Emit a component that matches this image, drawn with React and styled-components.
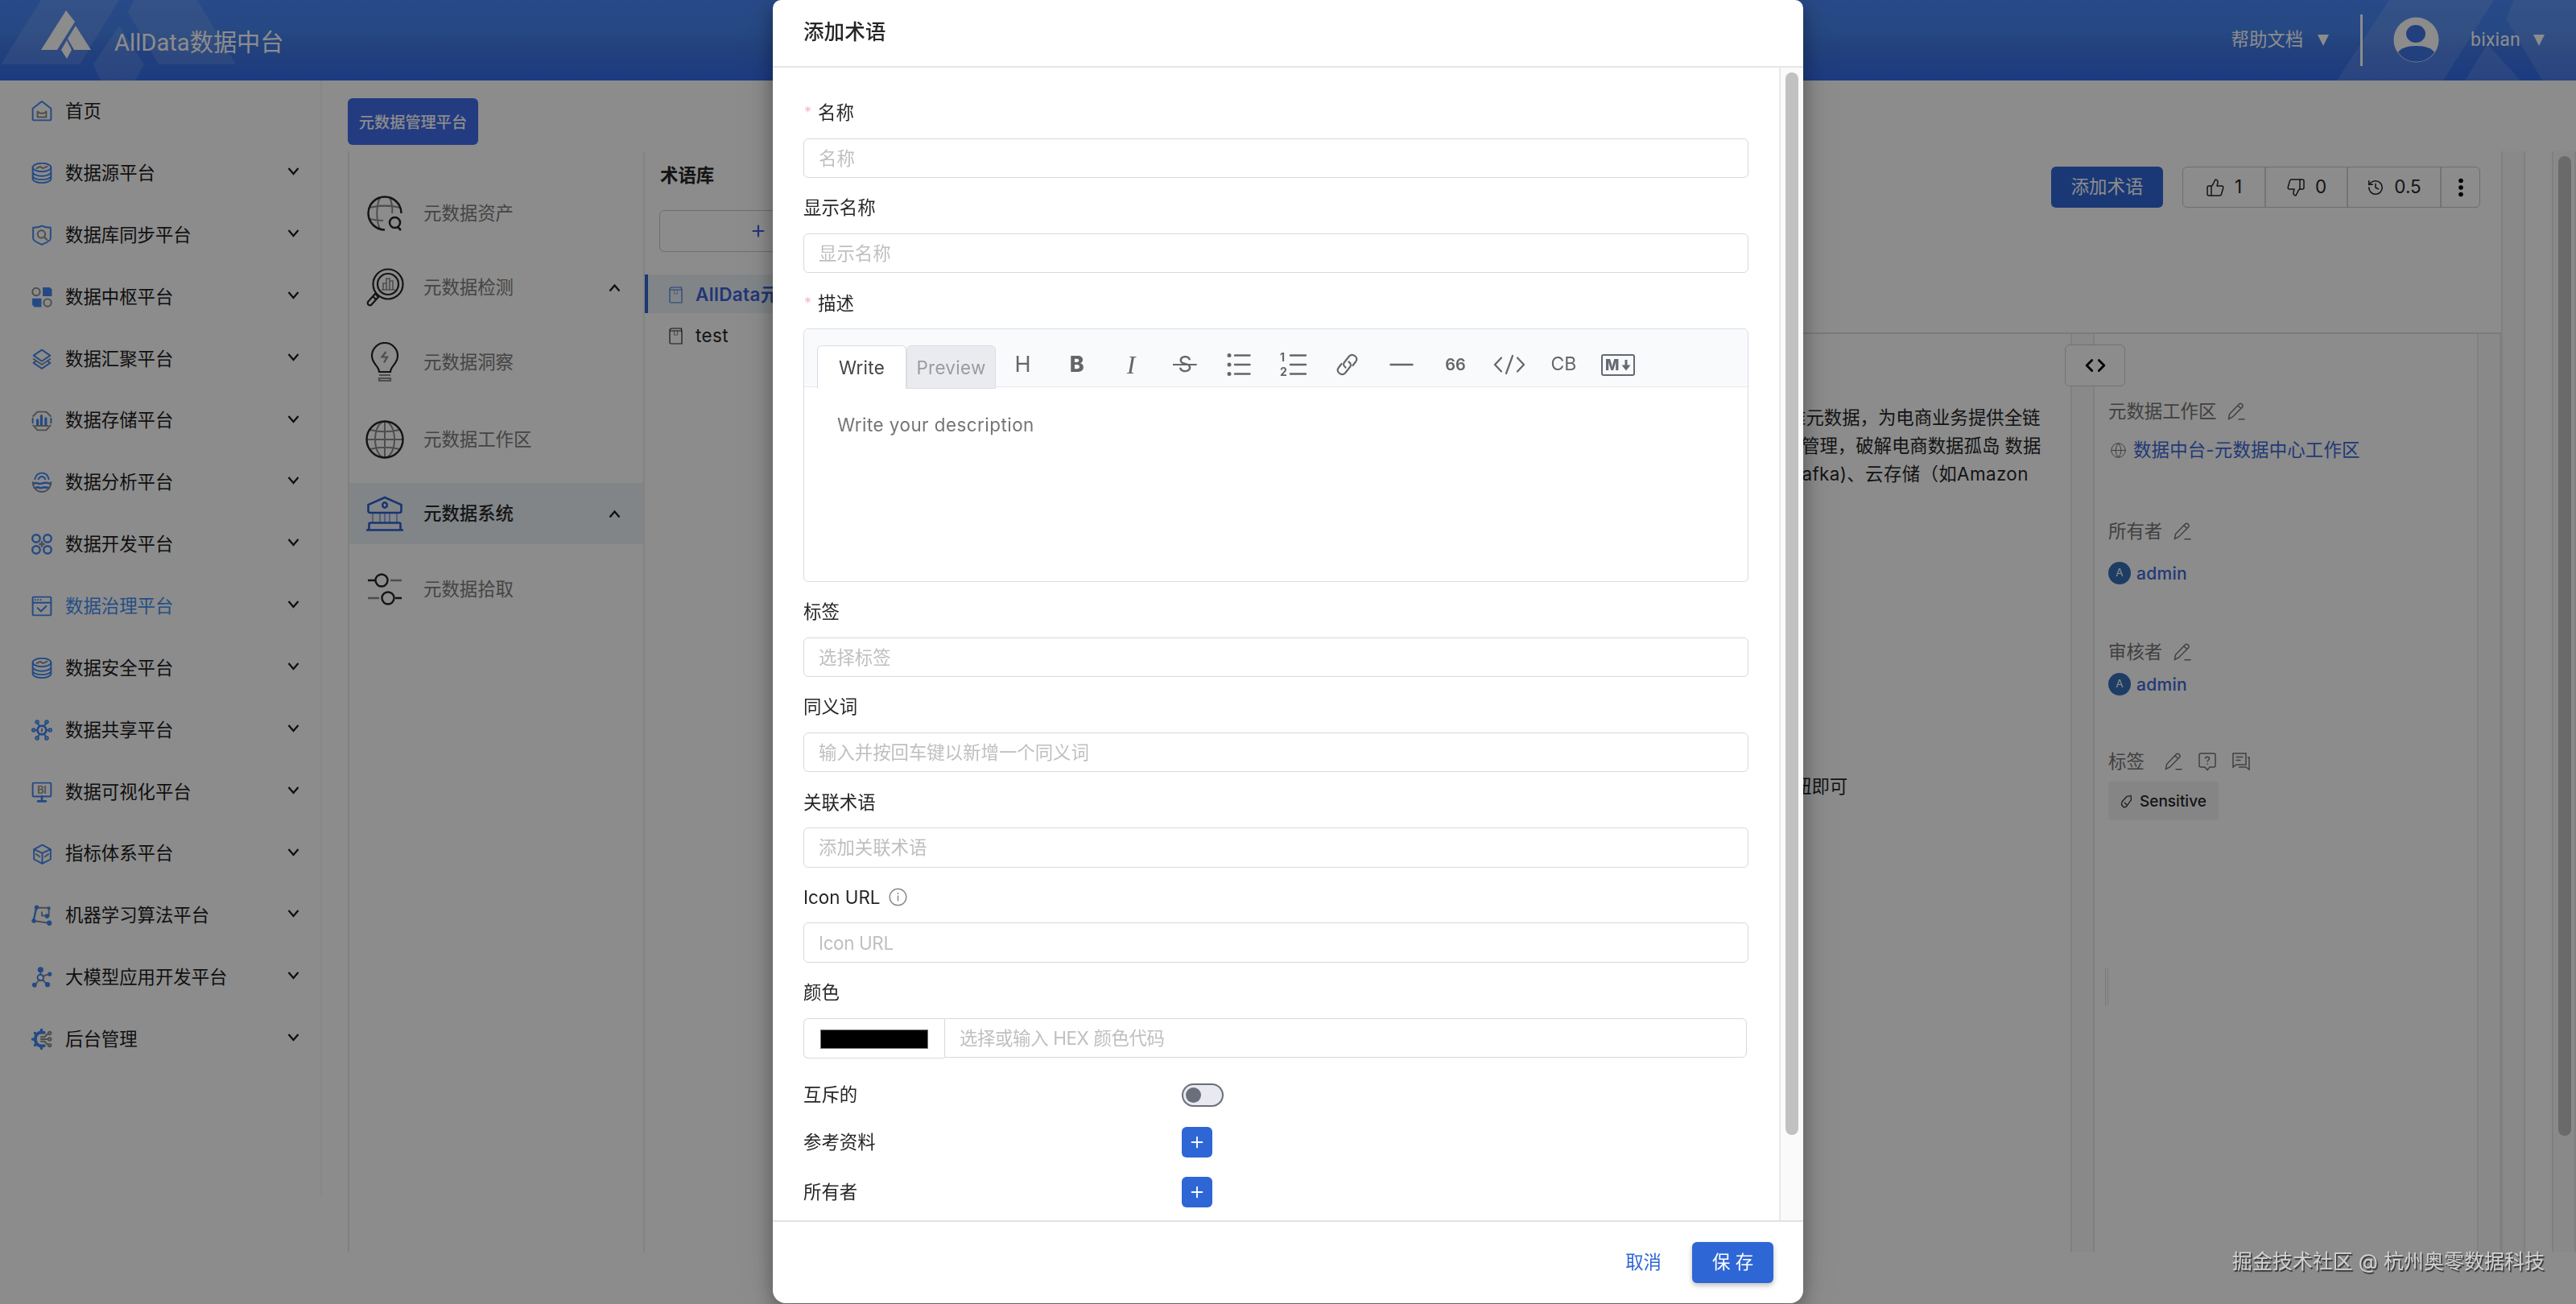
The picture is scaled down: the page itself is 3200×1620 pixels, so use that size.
import React from 'react';
import styled, { createGlobalStyle, css } from 'styled-components';
import { Code, Globe, History, List, Plus, ThumbsDown, ThumbsUp } from 'lucide-react';

const GlobalStyle = createGlobalStyle`
  * {
    box-sizing: border-box;
  }
  body {
    margin: 0;
    overflow: hidden;
    background: #fff;
    color: #262626;
    font-family: Inter, 'Noto Sans CJK SC', sans-serif;
    font-size: 22.4px;
    line-height: 1;
  }
  button, input, textarea {
    font: inherit;
  }
`;

const Page = styled.div`
  display: flex;
  flex-direction: column;
  width: 3200px;
  height: 1620px;
  overflow: hidden;
`;

/* ---------- header ---------- */
const Header = styled.header`
  position: relative;
  display: flex;
  align-items: center;
  flex: none;
  height: 100px;
  padding: 0 39px 0 51px;
  background: linear-gradient(180deg, #4a87f8 0%, #4583ee 40%, #3f77e4 60%, #346bea 100%);
  color: #fff;
`;
const HeaderArt = styled.svg`
  position: absolute;
  top: 0;
  left: 0;
`;
const HeaderPart = styled.div`
  position: relative;
  display: flex;
  align-items: center;
  height: 100px;
  padding-bottom: ${(props) => props.$bottom || 3}px;
`;
const Brand = styled.h1`
  margin: 8px auto 0 28px;
  position: relative;
  font-family: Roboto, 'Noto Sans CJK SC', sans-serif;
  font-weight: 400;
  font-size: 29.2px;
`;
const Caret = styled.i`
  margin-left: ${(props) => props.$gap}px;
  border: 7.5px solid transparent;
  border-top: 14px solid #fff;
  border-bottom: 0;
`;
const HeaderLine = styled.div`
  width: 3px;
  height: 64px;
  margin: 0 38px 0 39px;
  background: #fff;
`;
const UserName = styled.span`
  margin-left: 39px;
  font-family: Roboto, sans-serif;
  font-size: 23px;
  letter-spacing: 0.2px;
`;

/* ---------- left menu ---------- */
const Body = styled.div`
  display: flex;
  flex: 1;
  min-height: 0;
`;
const Sidebar = styled.aside`
  flex: none;
  width: 400px;
  height: 1388px;
  border-right: 2px solid #f6f6f6;
`;
const MenuItem = styled.div`
  display: flex;
  align-items: center;
  height: 76.85px;
  padding: 0 26px 0 39px;
  color: ${(props) => (props.$active ? '#4390f5' : '#1c1c1c')};
  & > svg {
    flex: none;
  }
  & > svg:last-child {
    margin-bottom: 3px;
  }
  & > span {
    flex: 1;
    margin-left: 16px;
  }
`;

/* ---------- second level ---------- */
const Main = styled.main`
  display: flex;
  flex-direction: column;
  flex: 1;
  min-width: 0;
`;
const TabBar = styled.div`
  display: flex;
  align-items: flex-end;
  flex: none;
  height: 88px;
  padding: 0 0 8px 32px;
`;
const PlatformTab = styled.div`
  display: flex;
  align-items: center;
  justify-content: center;
  width: 162px;
  height: 58px;
  padding-top: 4px;
  border-radius: 6px;
  background: #416ceb;
  color: #fff;
  font-size: 19.2px;
  font-weight: 500;
`;
const Content = styled.div`
  display: flex;
  height: 1368px;
  margin-left: 32px;
  border-left: 2px solid #e9e9e9;
`;
const Nav = styled.nav`
  flex: none;
  width: 367px;
  padding-top: 39px;
  border-right: 2px solid #ededed;
`;
const NavItem = styled.div`
  display: flex;
  align-items: center;
  height: 76px;
  margin-top: ${(props) => props.$gap || 0}px;
  padding: 0 28px 0 20px;
  color: ${(props) => (props.$active ? '#292929' : '#7d7d7d')};
  background: ${(props) => (props.$active ? '#ebf3f7' : 'transparent')};
  font-weight: ${(props) => (props.$active ? 500 : 400)};
  & > span {
    flex: 1;
    margin-left: 24px;
  }
`;
const Tree = styled.section`
  flex: none;
  width: 400px;
`;
const TreeTitle = styled.h2`
  margin: 19px 0 32px 19px;
  font-size: 22.4px;
  line-height: 22px;
  font-weight: 600;
`;
const AddGlossary = styled.div`
  display: flex;
  align-items: center;
  height: 52px;
  margin: 0 0 28px 18px;
  padding-left: 111px;
  border: 1px solid #c9c9c9;
  border-radius: 6px;
  color: #3c62d8;
`;
const TreeRow = styled.div`
  display: flex;
  align-items: center;
  height: 48px;
  margin-bottom: 3px;
  padding: 2px 0 0 26px;
  border-left: 4px solid transparent;
  gap: 16px;
  letter-spacing: 0.4px;
  ${(props) =>
    props.$active &&
    css`
      border-color: #2e66d6;
      background: #ebf3f7;
      color: #3c62d8;
      font-weight: 600;
    `}
`;

/* ---------- detail ---------- */
const Detail = styled.section`
  display: flex;
  flex-direction: column;
  flex: 1;
`;
const DetailHead = styled.div`
  display: flex;
  justify-content: flex-end;
  height: 227px;
  padding: 19px 26px 0 0;
  border-bottom: 2px solid #e0e0e0;
`;
const AddTerm = styled.div`
  display: flex;
  align-items: center;
  justify-content: center;
  width: 139px;
  height: 51px;
  margin-right: 24px;
  border-radius: 6px;
  background: #2e66d6;
  color: #fff;
`;
const Votes = styled.div`
  display: flex;
  height: 51px;
  border: 1px solid #c8c8c8;
  border-radius: 6px;
`;
const Vote = styled.div`
  display: flex;
  align-items: center;
  justify-content: center;
  gap: 12px;
  width: ${(props) => props.$width}px;
  & + & {
    border-left: 2px solid #d4d4d4;
  }
`;
const DetailBody = styled.div`
  display: flex;
  flex: 1;
`;
const Article = styled.div`
  flex: 1;
  padding-top: 86px;
  position: relative;
`;
const ArticleLine = styled.p`
  margin: 0;
  padding-left: ${(props) => props.$indent}px;
  line-height: 35px;
  letter-spacing: ${(props) => props.$spacing || 0}px;
  white-space: nowrap;
`;
const ArticleNote = styled(ArticleLine)`
  margin-top: 353px;
`;
const Track = styled.div`
  position: relative;
  flex: none;
  width: 30px;
  border: solid #eaeaea;
  border-width: 0 2px;
  background: #fafafa;
`;
const TrackThumb = styled.div`
  width: 16px;
  height: ${(props) => props.$height}px;
  margin: 6px 0 0 6px;
  border-radius: 8px;
  background: #c1c1c1;
`;
const Collapse = styled.div`
  position: absolute;
  top: 13px;
  left: -9px;
  display: flex;
  align-items: center;
  justify-content: center;
  width: 75px;
  height: 52px;
  border: 1px solid #d0d0d0;
  border-radius: 6px;
  background: #fff;
  color: #000;
`;
const Side = styled.aside`
  flex: none;
  width: 475px;
  padding: 84px 0 0 17px;
`;
const SideTitle = styled.div`
  display: flex;
  align-items: center;
  gap: ${(props) => props.$gap || 14}px;
  height: 24px;
  margin-top: ${(props) => props.$top || 0}px;
  color: #767676;
`;
const TagIcons = styled.div`
  display: flex;
  gap: 20px;
  margin-left: 5px;
`;
const SideLink = styled.div`
  display: flex;
  align-items: center;
  height: 28px;
  margin-top: ${(props) => props.$top}px;
  gap: ${(props) => props.$gap}px;
  padding-left: ${(props) => props.$left || 0}px;
  color: #3c68d8;
  letter-spacing: 0.2px;
  white-space: nowrap;
`;
const AdminName = styled.span`
  font-size: 21px;
  font-weight: 500;
  letter-spacing: 0.3px;
`;
const UserBadge = styled.span`
  display: flex;
  align-items: center;
  justify-content: center;
  width: 28px;
  height: 28px;
  border-radius: 50%;
  background: #3670b8;
  color: #fff;
  font-size: 13.5px;
`;
const Tag = styled.div`
  display: flex;
  align-items: center;
  gap: 9px;
  width: 137px;
  height: 48px;
  margin-top: 13px;
  padding-left: 15px;
  border-radius: 4px;
  background: #f3f3f3;
  font-size: 19px;
  font-weight: 500;
`;
const Resizer = styled.div`
  width: 4px;
  height: 46px;
  margin: 184px 0 0 -4px;
  border: solid #dcdcdc;
  border-width: 0 1px;
`;
const Spacer = styled.div`
  width: 33px;
`;

/* ---------- modal ---------- */
const Mask = styled.div`
  position: fixed;
  inset: 0;
  display: flex;
  justify-content: center;
  background: rgba(0, 0, 0, 0.45);
`;
const Modal = styled.div`
  display: flex;
  flex-direction: column;
  width: 1280px;
  height: 1619px;
  overflow: hidden;
  border-radius: 10px 10px 16px 16px;
  background: #fff;
  box-shadow: 0 8px 24px rgba(0, 0, 0, 0.35), 0 0 60px rgba(0, 0, 0, 0.12);
`;
const ModalTitle = styled.div`
  flex: none;
  height: 84px;
  padding: 27px 0 0 38px;
  border-bottom: 2px solid #e6e6e6;
  font-size: 25.6px;
  font-weight: 500;
`;
const ModalBody = styled.div`
  display: flex;
  flex: none;
  height: 1432px;
  overflow: hidden;
`;
const Form = styled.div`
  flex: 1;
  padding: 24px 38px 0 38px;
`;
const FormScroll = styled.div`
  flex: none;
  width: 30px;
  border-left: 2px solid #e8e8e8;
  background: #fafafa;
`;
const Field = styled.div`
  margin-bottom: 5px;
`;
const Label = styled.label`
  display: flex;
  align-items: center;
  height: 63.7px;
  padding-top: 1px;
`;
const Required = styled.span`
  width: 18px;
  padding-left: 1px;
  color: #f7b9c0;
  font-size: 18px;
`;
const Input = styled.input`
  display: block;
  width: ${(props) => (props.$width ? `${props.$width}px` : '100%')};
  height: 49.5px;
  padding: 0 18px;
  border: 1.5px solid #d9d9d9;
  border-radius: ${(props) => props.$radius || '6px'};
  outline: 0;
  &::placeholder {
    color: #bfbfbf;
    opacity: 1;
    letter-spacing: ${(props) => (props.$tight ? '-0.35px' : 'normal')};
  }
`;
const Editor = styled.div`
  height: 315px;
  border: 1.5px solid #dadde6;
  border-radius: 6px;
`;
const Toolbar = styled.div`
  display: flex;
  height: 72px;
  padding: 20px 0 0 16px;
  border-bottom: 1px solid #e6e8ee;
  border-radius: 6px 6px 0 0;
  background: #f8fafc;
`;
const EditorTab = styled.div`
  display: flex;
  align-items: center;
  justify-content: center;
  flex: none;
  width: 111px;
  height: 54px;
  padding-top: 2px;
  border: 1px solid #dadde6;
  border-bottom-color: ${(props) => (props.$active ? '#fff' : '#dadde6')};
  border-radius: 6px 6px 0 0;
  background: ${(props) => (props.$active ? '#fff' : '#eaebef')};
  color: ${(props) => (props.$active ? '#444' : '#999ba3')};
  letter-spacing: 0.3px;
`;
const Tool = styled.div`
  display: flex;
  align-items: center;
  justify-content: center;
  width: 67.2px;
  height: 47px;
  color: #666;
  font-size: ${(props) => props.$size || 27}px;
  font-weight: ${(props) => props.$weight || 400};
`;
const ItalicTool = styled(Tool)`
  font-family: 'Liberation Serif', serif;
  font-style: italic;
  font-size: 32px;
`;
const StrikeTool = styled(Tool)`
  & > span {
    padding: 0 6px;
    background: linear-gradient(#666, #666) center 52% / 100% 2px no-repeat;
  }
`;
const Textarea = styled.div`
  padding: 36px 0 0 41px;
  color: #757575;
  letter-spacing: 0.48px;
`;
const ColorRow = styled.div`
  display: flex;
`;
const ColorBox = styled.div`
  width: 175px;
  height: 50.5px;
  padding: 13px 20px;
  border: 1.5px solid #d9d9d9;
  border-right: 0;
  border-radius: 6px 0 0 6px;
`;
const Swatch = styled.div`
  height: 24px;
  border: 1px solid #767676;
  background: #000;
`;
const SplitRow = styled.div`
  display: grid;
  grid-template-columns: 470px 1fr;
  align-items: center;
  height: ${(props) => props.$height}px;
`;
const Switch = styled.div`
  width: 52px;
  height: 29px;
  padding: 3px;
  border: 2px solid #6b6e7b;
  border-radius: 15px;
  background: #e8eaef;
  &::before {
    content: '';
    display: block;
    width: 19px;
    height: 19px;
    border-radius: 50%;
    background: #6b6e7b;
  }
`;
const PlusButton = styled.div`
  display: flex;
  align-items: center;
  justify-content: center;
  width: 38px;
  height: 38px;
  border-radius: 6px;
  background: #2e66d6;
  color: #fff;
`;
const ModalFooter = styled.div`
  display: flex;
  align-items: flex-start;
  justify-content: flex-end;
  flex: 1;
  padding: 25px 37px 0 0;
  border-top: 2px solid #e2e2e2;
`;
const Cancel = styled.div`
  margin-right: 38px;
  line-height: 50px;
  color: #2e66d6;
`;
const Save = styled.div`
  width: 101px;
  height: 51px;
  border-radius: 6px;
  background: #2e66d6;
  box-shadow: 0 3px 6px rgba(0, 0, 0, 0.25);
  color: #fff;
  line-height: 50px;
  text-align: center;
`;
const Watermark = styled.div`
  position: fixed;
  right: 39px;
  bottom: 38px;
  color: #d2d2d2;
  font-size: 25px;
  line-height: 30px;
  text-shadow: 1.5px 1.5px 1px #333;
`;

/* ---------- icons ---------- */
const BLUE = '#4388f0';
const GREY = '#8d8d8d';

const Icon = ({ size = 26, color = BLUE, width = 1.8, children }) => (
  <svg
    width={size}
    height={size}
    viewBox="0 0 24 24"
    fill="none"
    stroke={color}
    strokeWidth={width}
    strokeLinecap="round"
    strokeLinejoin="round"
  >
    {children}
  </svg>
);

const Chevron = ({ up }) => (
  <svg width="15" height="11" viewBox="0 0 15 11" fill="none" stroke="#1c1c1c" strokeWidth="2.3">
    <path d={up ? 'M1.5 9.5l6-7 6 7' : 'M1.5 1l6 7 6-7'} />
  </svg>
);

const menuIcons = {
  home: (
    <Icon>
      <path d="M12 1l10.5 8v12c0 1-.5 1.500-1.500 1.500H3c-1 0-1.500-.5-1.500-1.500V9z" />
      <path d="M7 12.500V19h10v-6.500l-3 2h-4z" stroke={GREY} />
    </Icon>
  ),
  database: (
    <Icon>
      <ellipse cx="12" cy="5.500" rx="10.500" ry="4.800" />
      <path d="M1.500 6v4.500c0 2.700 4.700 5 10.500 5s10.500-2.300 10.500-5V6M1.500 10.500V15c0 2.700 4.700 4.500 10.500 4.500s10.500-1.800 10.500-4.500v-4.500M1.500 15v3.500c0 2.500 4.700 4.700 10.500 4.700s10.500-2.200 10.500-4.700V15" />
      <path d="M6 6.500l4-2 3 2 5-2" stroke={GREY} />
    </Icon>
  ),
  shield: (
    <Icon>
      <path d="M12 1.500c3 1.500 6 2 10 2V16c0 2-5 5-10 7-5-2-10-5-10-7V3.500c4 0 7-.5 10-2z" />
      <circle cx="11.500" cy="11" r="4.300" stroke={GREY} />
      <path d="M15 14.500l3 3" stroke={GREY} />
    </Icon>
  ),
  blocks: (
    <Icon>
      <circle cx="5.500" cy="6" r="4.300" stroke={GREY} />
      <circle cx="18.500" cy="18.500" r="4.300" stroke={GREY} />
      <path d="M13 1h8l2.500 2v8H13zM1 13.500h10.500v10H3.500L1 21z" fill={BLUE} stroke="none" />
    </Icon>
  ),
  layers: (
    <Icon>
      <path d="M12 1.500l9.500 6.500-9.500 6.500L2.500 8z" />
      <path d="M2.500 12l9.500 6.500 9.500-6.500" stroke={GREY} />
      <path d="M5 14.500l-2.500 2L12 23l9.500-6.500-2.500-2" />
    </Icon>
  ),
  storage: (
    <Icon>
      <path d="M7 1.500h10l5 5M22 17l-5 5.500H7L2 17M2 6.500l5-5" stroke={GREY} />
      <path d="M1.500 9v5M22.500 9v5" />
      <path d="M7 16v-5M11.500 16V6M16.500 16V9" strokeWidth="3" />
      <path d="M5 17.500h14" stroke={GREY} />
    </Icon>
  ),
  analysis: (
    <Icon>
      <path d="M4 8.500C5 4 8 1.500 12 1.500s7 2.500 8 7M8 8.500c1-2 2.300-3 4-3s3 1 4 3" />
      <path d="M1.500 12c.3 6.500 4.500 11 10.500 11s10.200-4.500 10.500-11" stroke={GREY} />
      <path d="M3 13.500c3-2 5 1.500 9 0s6-1 9 0M5 18.500c3-2 4 1 7 0s4-1 7 0" strokeWidth="2.400" />
    </Icon>
  ),
  dev: (
    <Icon width={2.2}>
      <circle cx="5.500" cy="5.500" r="4.400" />
      <circle cx="18.500" cy="5.500" r="4.400" />
      <circle cx="5.500" cy="18.500" r="4.400" />
      <circle cx="18.500" cy="18.500" r="4.400" />
      <path d="M12 9.500v5M9.500 12h5" stroke={GREY} />
    </Icon>
  ),
  govern: (
    <Icon>
      <rect x="1.500" y="1.500" width="21" height="21" rx="1" />
      <path d="M1.500 8h21M4.500 4.800h.2M7.500 4.800h.2M10.500 4.800h.2M7 14l4 4 6-6" />
    </Icon>
  ),
  share: (
    <Icon>
      <circle cx="12" cy="12" r="5" strokeWidth="2.600" />
      <path d="M9.500 7.500L7 4M14.500 7.500L17 4M9.500 16.500L7 20M14.500 16.500L17 20M4 12h3M17 12h3" />
      <circle cx="6.500" cy="2.800" r="1.700" />
      <circle cx="17.500" cy="2.800" r="1.700" />
      <circle cx="6.500" cy="21.200" r="1.700" />
      <circle cx="17.500" cy="21.200" r="1.700" />
      <circle cx="2.500" cy="12" r="1.700" />
      <circle cx="21.500" cy="12" r="1.700" />
      <path d="M12 10.500v3" stroke={GREY} />
    </Icon>
  ),
  bi: (
    <Icon>
      <rect x="1.500" y="1.500" width="21" height="15.500" rx="1" />
      <path d="M12 17v5M7.500 22.500h9" strokeWidth="2.500" />
      <text x="12" y="13.500" textAnchor="middle" fontSize="11.500" fontWeight="600" fill={GREY} stroke="none">
        BI
      </text>
    </Icon>
  ),
  cube: (
    <Icon>
      <path d="M12.500 1.500l9.500 5v11.500l-9.500 5-9.500-5V6.500zM3 6.500l9.500 4.500L22 6.500M12.500 11v12" />
      <path d="M5.500 12l4 3M19.500 12l-4 3" stroke={GREY} />
    </Icon>
  ),
  ml: (
    <Icon>
      <path d="M6 3.500h14v9h-8V8.500M6 3.500L2.500 18.500l18 2.500" stroke={GREY} />
      <path d="M5.500 3.500L2.500 18" />
      <circle cx="6" cy="3" r="1.700" fill={BLUE} />
      <circle cx="20" cy="4" r="1" fill={BLUE} />
      <circle cx="18" cy="13" r="1.700" fill={BLUE} />
      <circle cx="2.800" cy="18.500" r="1.700" fill={BLUE} />
      <circle cx="20.500" cy="21" r="2" fill={BLUE} />
    </Icon>
  ),
  model: (
    <Icon>
      <path d="M10.500 5v4M13 11l7-2.500M9 15l-5 6M13 15l4.500 5" stroke={GREY} />
      <circle cx="10.500" cy="12.500" r="3.500" />
      <circle cx="10.500" cy="3.500" r="2.400" fill={BLUE} />
      <circle cx="21" cy="8.500" r="1.500" fill={BLUE} />
      <circle cx="3.500" cy="21" r="1.800" fill={BLUE} />
      <circle cx="18.500" cy="20.500" r="2" fill={BLUE} />
    </Icon>
  ),
  admin: (
    <Icon>
      <path d="M14.500 4.500C8 3 4.500 7 4.500 12s3.500 9 10 7.500" strokeWidth="3.600" />
      <path d="M11.500 1v3M11.500 20v3M4 5l2 2M4 19l2-2M1 12h3" strokeWidth="3" />
      <path d="M11 9.500h4l4-4M11 12h8M11 14.500h4l4 4" stroke={GREY} />
      <circle cx="21" cy="5" r="1.600" stroke={GREY} />
      <circle cx="21" cy="12" r="1.600" stroke={GREY} />
      <circle cx="21" cy="19" r="1.600" stroke={GREY} />
    </Icon>
  ),
};

const DARK = '#262626';

const navIcons = {
  asset: (
    <svg width="48" height="48" viewBox="0 0 48 48" fill="none" stroke={GREY} strokeWidth="2">
      <path d="M5 17c12-3 26-3 38 0M5 31c6 1.500 10 2 17 2M18 4c-5 12-5 28 0 40M30 4c3 7 4 13 3 20" />
      <path d="M24 44.500A20.500 20.500 0 1 1 44.500 24" stroke={DARK} strokeWidth="2.500" />
      <circle cx="36.500" cy="35.500" r="6.500" stroke={DARK} strokeWidth="2.500" />
      <path d="M40 41l4 4" stroke={DARK} strokeWidth="2.500" />
    </svg>
  ),
  check: (
    <svg width="48" height="48" viewBox="0 0 48 48" fill="none" stroke={DARK} strokeWidth="2.200">
      <circle cx="28" cy="20" r="18.500" />
      <circle cx="28" cy="20" r="13" />
      <path d="M15 34l-3-2-9 10c-1 3 1 5 4 4l9-10-2-2M9 35l4 4" />
      <path d="M20 27h17M22 27v-8h4v8M26 27V13h4v14M30 27V16h4v11" stroke={GREY} strokeWidth="1.600" />
    </svg>
  ),
  insight: (
    <svg width="48" height="50" viewBox="0 0 48 50" fill="none" stroke={DARK} strokeWidth="2.200">
      <path d="M17 37c0-7-9-10-9-20a16 16 0 0 1 32 0c0 10-9 13-9 20z" />
      <path d="M25.500 12l-5 6.500h6.500l-4 7" stroke={GREY} />
      <path d="M17 41h14M17 45h14v3H17z" stroke={GREY} />
    </svg>
  ),
  domain: (
    <svg width="48" height="50" viewBox="0 0 48 50" fill="none" stroke={GREY} strokeWidth="2">
      <path d="M24 2v46M2 25h44M6 13c12 3 24 3 36 0M6 37c12-3 24-3 36 0" />
      <ellipse cx="24" cy="25" rx="12" ry="22.500" />
      <circle cx="24" cy="25" r="22.500" stroke={DARK} strokeWidth="2.400" />
    </svg>
  ),
  system: (
    <svg width="48" height="48" viewBox="0 0 48 48" fill="none" stroke="#2e5fcf" strokeWidth="2.600">
      <path d="M6 23h36c2 0 2.500-1 2.500-2.500V13L24 4 3.500 13v7.500C3.500 22 4 23 6 23zM4.500 44v-7c0-1 .5-1.500 1.500-1.500h36c1 0 1.500.5 1.500 1.500v7M1 44.500h46" />
      <ellipse cx="24" cy="13.500" rx="2.800" ry="3.200" />
      <path d="M9 23v12M18 23v12M24 23v12M30 23v12M39 23v12" strokeWidth="1.300" opacity=".7" />
    </svg>
  ),
  pick: (
    <svg width="48" height="48" viewBox="0 0 48 48" fill="none" stroke={DARK} strokeWidth="2.400">
      <path d="M3 13h9M37 35h8" />
      <path d="M31 13h14M3 35h14" stroke={GREY} />
      <circle cx="20" cy="13" r="7.500" />
      <circle cx="28" cy="35" r="7.500" />
    </svg>
  ),
};

const BookIcon = ({ color }) => (
  <svg width="17" height="21" viewBox="0 0 17 21" fill="none" stroke={color} strokeWidth="1.200">
    <path d="M1 4v14.500c0 1 .5 1.500 1.500 1.500h13.500V4zM1 4c0-2 1-3 2.500-3h12v3" />
    <path d="M6.500 4v5h4V4" opacity=".5" />
  </svg>
);

const PencilIcon = () => (
  <svg width="22" height="22" viewBox="0 0 22 22" fill="none" stroke="#767676" strokeWidth="1.500">
    <path d="M1.500 20.500l1-6L14.500 2c1-1 2-1 3-.3l1 1c.8.8.8 2 0 3L6.500 18zM13 4l4 3.500M13.500 20.800h8" />
  </svg>
);

const toolbarTools = (
  <>
    <Tool>H</Tool>
    <Tool $weight={800}>B</Tool>
    <ItalicTool>I</ItalicTool>
    <StrikeTool>
      <span>S</span>
    </StrikeTool>
    <Tool>
      <svg width="30" height="28" viewBox="0 0 30 28" fill="#666" stroke="#666" strokeWidth="2.400" strokeLinecap="round">
        <path d="M10 2.500h18.500M10 14h18.500M10 25.500h18.500" />
        <circle cx="3" cy="2.500" r="1.300" />
        <circle cx="3" cy="14" r="1.300" />
        <circle cx="3" cy="25.500" r="1.300" />
      </svg>
    </Tool>
    <Tool>
      <svg width="34" height="30" viewBox="0 0 34 30" fill="none" stroke="#666" strokeWidth="2.400">
        <path d="M13 3.500h19M13 15h19M13 26.500h19" strokeLinecap="round" />
        <text x="0" y="11" fontSize="14" fontWeight="700" fill="#666" stroke="none">
          1
        </text>
        <text x="0" y="29" fontSize="14" fontWeight="700" fill="#666" stroke="none">
          2
        </text>
      </svg>
    </Tool>
    <Tool>
      <svg width="30" height="30" viewBox="0 -2 30 30" fill="none" stroke="#666" strokeWidth="2.200" strokeLinecap="round">
        <path d="M12.500 16.500c-3-2-3-5-1-7l5.500-7c2-2 5-2 7.500 0s2.300 5 .5 7l-3.500 4.500" />
        <path d="M16.500 9.500c3 2 3 5 1 7L12 23.500c-2 2-5 2-7.500 0s-2.300-5-.5-7L7.500 12" />
      </svg>
    </Tool>
    <Tool>
      <svg width="30" height="4" viewBox="0 0 30 4" stroke="#666" strokeWidth="2.400" strokeLinecap="round">
        <path d="M1.500 2h27" />
      </svg>
    </Tool>
    <Tool $size={20} $weight={600}>
      66
    </Tool>
    <Tool>
      <svg width="40" height="26" viewBox="0 0 40 26" fill="none" stroke="#666" strokeWidth="2.200" strokeLinecap="round">
        <path d="M10 4.500L2 13l8 8.500M30 4.500l8 8.500-8 8.500M24 2l-8 22" />
      </svg>
    </Tool>
    <Tool $size={23}>CB</Tool>
    <Tool>
      <svg width="42" height="28" viewBox="0 0 42 28" fill="none" stroke="#666872" strokeWidth="2">
        <rect x="1" y="2" width="40" height="25" rx="2" />
        <text x="5" y="21" fontSize="18.500" fontWeight="800" fill="#666872" stroke="none">
          M
        </text>
        <path d="M31 8v8" strokeWidth="3" />
        <path d="M25.500 14.500h11L31 21.500z" fill="#666872" stroke="none" />
      </svg>
    </Tool>
  </>
);

/* ---------- data ---------- */
const menu = [
  { icon: 'home', text: '首页', leaf: true },
  { icon: 'database', text: '数据源平台' },
  { icon: 'shield', text: '数据库同步平台' },
  { icon: 'blocks', text: '数据中枢平台' },
  { icon: 'layers', text: '数据汇聚平台' },
  { icon: 'storage', text: '数据存储平台' },
  { icon: 'analysis', text: '数据分析平台' },
  { icon: 'dev', text: '数据开发平台' },
  { icon: 'govern', text: '数据治理平台', active: true },
  { icon: 'database', text: '数据安全平台' },
  { icon: 'share', text: '数据共享平台' },
  { icon: 'bi', text: '数据可视化平台' },
  { icon: 'cube', text: '指标体系平台' },
  { icon: 'ml', text: '机器学习算法平台' },
  { icon: 'model', text: '大模型应用开发平台' },
  { icon: 'admin', text: '后台管理' },
];

const nav = [
  { icon: 'asset', text: '元数据资产' },
  { icon: 'check', text: '元数据检测', gap: 16, open: true },
  { icon: 'insight', text: '元数据洞察', gap: 17 },
  { icon: 'domain', text: '元数据工作区', gap: 20 },
  { icon: 'system', text: '元数据系统', gap: 16, open: true, active: true },
  { icon: 'pick', text: '元数据拾取', gap: 18 },
];

const TextField = ({ label, placeholder, required, tight, extra }) => (
  <Field>
    <Label>
      {required && <Required>*</Required>}
      {label}
      {extra}
    </Label>
    <Input placeholder={placeholder} $tight={tight} />
  </Field>
);

const InfoIcon = styled.svg`
  margin-left: 10px;
`;

const TermModal = () => (
  <Modal>
    <ModalTitle>添加术语</ModalTitle>
    <ModalBody>
      <Form>
        <TextField label="名称" placeholder="名称" required />
        <TextField label="显示名称" placeholder="显示名称" />
        <Field>
          <Label>
            <Required>*</Required>描述
          </Label>
          <Editor>
            <Toolbar>
              <EditorTab $active>Write</EditorTab>
              <EditorTab>Preview</EditorTab>
              {toolbarTools}
            </Toolbar>
            <Textarea>Write your description</Textarea>
          </Editor>
        </Field>
        <TextField label="标签" placeholder="选择标签" />
        <TextField label="同义词" placeholder="输入并按回车键以新增一个同义词" />
        <TextField label="关联术语" placeholder="添加关联术语" />
        <TextField
          label="Icon URL"
          placeholder="Icon URL"
          tight
          extra={
            <InfoIcon width="23" height="23" viewBox="0 0 23 23" fill="none" stroke="#8c8c8c" strokeWidth="1.500">
              <circle cx="11.500" cy="11.500" r="10.300" />
              <path d="M11.500 9.500v7M11.500 6v2" />
            </InfoIcon>
          }
        />
        <Field>
          <Label>颜色</Label>
          <ColorRow>
            <ColorBox>
              <Swatch />
            </ColorBox>
            <Input $width={997} $radius="0 6px 6px 0" $tight placeholder="选择或输入 HEX 颜色代码" />
          </ColorRow>
        </Field>
        <SplitRow $height={80}>
          互斥的
          <Switch />
        </SplitRow>
        <SplitRow $height={34}>
          参考资料
          <PlusButton>
            <Plus size={22} strokeWidth={2} />
          </PlusButton>
        </SplitRow>
        <SplitRow $height={94}>
          所有者
          <PlusButton>
            <Plus size={22} strokeWidth={2} />
          </PlusButton>
        </SplitRow>
      </Form>
      <FormScroll>
        <TrackThumb $height={1320} />
      </FormScroll>
    </ModalBody>
    <ModalFooter>
      <Cancel>取消</Cancel>
      <Save>保 存</Save>
    </ModalFooter>
  </Modal>
);

const App = () => (
  <>
    <GlobalStyle />
    <Page>
      <Header>
        <HeaderArt width="3200" height="100" viewBox="0 0 3200 100" fill="#fff" fillOpacity=".12">
          <path d="M51 0h97L99 80H1zM166 0h79l48 80h-96l-38-65zM148 32l31 48-11 20h-43l-9-20z" />
          <path d="M2968 0h130l-63 100h-132zM3123 0h77v100h-42l-45-77zM3090 55l41 45h-69z" />
        </HeaderArt>
        <HeaderPart $bottom={15}>
          <svg width="63" height="60" viewBox="51 13 63 60" fill="#fff">
            <path d="M82 13l11 14-22 35H51zM94 32l19 30H92l-8-14zM83 50l6 12-6 11-7-11z" />
          </svg>
        </HeaderPart>
        <Brand>AllData数据中台</Brand>
        <HeaderPart $bottom={1}>
          帮助文档
          <Caret $gap={18} />
          <HeaderLine />
          <svg width="57" height="57" viewBox="0 0 57 57">
            <circle cx="28.500" cy="28.500" r="28" fill="#fff" />
            <ellipse cx="28" cy="21" rx="12" ry="11" fill="#3f76e6" />
            <path d="M6 44c3-5 11-8 22.500-8S48 39 51 44a27.300 27.300 0 0 1-45 0z" fill="#3f76e6" />
          </svg>
          <UserName>bixian</UserName>
          <Caret $gap={16} />
        </HeaderPart>
      </Header>
      <Body>
        <Sidebar>
          {menu.map((item) => (
            <MenuItem key={item.text} $active={item.active}>
              {menuIcons[item.icon]}
              <span>{item.text}</span>
              {!item.leaf && <Chevron />}
            </MenuItem>
          ))}
        </Sidebar>
        <Main>
          <TabBar>
            <PlatformTab>元数据管理平台</PlatformTab>
          </TabBar>
          <Content>
            <Nav>
              {nav.map((item) => (
                <NavItem key={item.text} $gap={item.gap} $active={item.active}>
                  {navIcons[item.icon]}
                  <span>{item.text}</span>
                  {item.open && <Chevron up />}
                </NavItem>
              ))}
            </Nav>
            <Tree>
              <TreeTitle>术语库</TreeTitle>
              <AddGlossary>
                <Plus size={22} strokeWidth={2.4} />
              </AddGlossary>
              <TreeRow $active>
                <BookIcon color="#3f78d8" />
                AllData元
              </TreeRow>
              <TreeRow>
                <BookIcon color="#262626" />
                test
              </TreeRow>
            </Tree>
            <Detail>
              <DetailHead>
                <AddTerm>添加术语</AddTerm>
                <Votes>
                  <Vote $width={101}>
                    <ThumbsUp size={24} strokeWidth={1.5} />1
                  </Vote>
                  <Vote $width={102}>
                    <ThumbsDown size={24} strokeWidth={1.5} />0
                  </Vote>
                  <Vote $width={116}>
                    <History size={22} strokeWidth={1.7} />
                    0.5
                  </Vote>
                  <Vote $width={49}>
                    <svg width="6" height="24" viewBox="0 0 6 24">
                      <circle cx="3" cy="3.500" r="2.800" />
                      <circle cx="3" cy="12" r="2.800" />
                      <circle cx="3" cy="20.500" r="2.800" />
                    </svg>
                  </Vote>
                </Votes>
              </DetailHead>
              <DetailBody>
                <Article>
                  <ArticleLine $indent={1020}>维元数据，为电商业务提供全链</ArticleLine>
                  <ArticleLine $indent={1037}>管理，破解电商数据孤岛 数据</ArticleLine>
                  <ArticleLine $indent={1022} $spacing={0.4}>
                    Kafka)、云存储（如Amazon
                  </ArticleLine>
                  <ArticleNote $indent={1027}>钮即可</ArticleNote>
                </Article>
                <Track>
                  <Collapse>
                    <Code size={26} strokeWidth={2.6} />
                  </Collapse>
                </Track>
                <Side>
                  <SideTitle>
                    元数据工作区
                    <PencilIcon />
                  </SideTitle>
                  <SideLink $top={22} $gap={8} $left={2}>
                    <Globe size={21} strokeWidth={1.1} color="#6f6f6f" />
                    数据中台-元数据中心工作区
                  </SideLink>
                  <SideTitle $top={75}>
                    所有者
                    <PencilIcon />
                  </SideTitle>
                  <SideLink $top={26} $gap={7}>
                    <UserBadge>A</UserBadge>
                    <AdminName>admin</AdminName>
                  </SideLink>
                  <SideTitle $top={72}>
                    审核者
                    <PencilIcon />
                  </SideTitle>
                  <SideLink $top={14} $gap={7}>
                    <UserBadge>A</UserBadge>
                    <AdminName>admin</AdminName>
                  </SideLink>
                  <SideTitle $top={70} $gap={20}>
                    标签
                    <TagIcons>
                      <PencilIcon />
                      <svg width="22" height="23" viewBox="0 0 22 23" fill="none" stroke="#767676" strokeWidth="1.500">
                        <path d="M3 1h16c1.500 0 2 .7 2 2v13c0 1.500-.5 2-2 2h-5l-3 3.500L8 18H3c-1.500 0-2-.5-2-2V3c0-1.300.5-2 2-2z" />
                        <path d="M8.500 7.500c0-3 5-3 5 0 0 2-2.500 1.800-2.500 4M11 13.500v1.500" />
                      </svg>
                      <svg width="22" height="22" viewBox="0 0 22 22" fill="none" stroke="#767676" strokeWidth="1.500">
                        <path d="M1 1h16v14H5l-4 3zM4.500 5.500h9M4.500 9.500h6M19 6h2v15l-4-3H8" />
                      </svg>
                    </TagIcons>
                  </SideTitle>
                  <Tag>
                    <svg width="15" height="17" viewBox="0 0 15 17" fill="none" stroke="#262626" strokeWidth="1.200">
                      <path d="M2 9l6-6.500 5-1 .5 5L7.500 15 4.500 16 1.500 13zM11 4v.2M5 10l3 3" />
                    </svg>
                    Sensitive
                  </Tag>
                  <Resizer />
                </Side>
                <Track />
              </DetailBody>
            </Detail>
            <Track />
            <Spacer />
            <Track>
              <TrackThumb $height={1217} />
            </Track>
          </Content>
        </Main>
      </Body>
    </Page>
    <Mask>
      <TermModal />
    </Mask>
    <Watermark>掘金技术社区 @ 杭州奥零数据科技</Watermark>
  </>
);

export default App;
